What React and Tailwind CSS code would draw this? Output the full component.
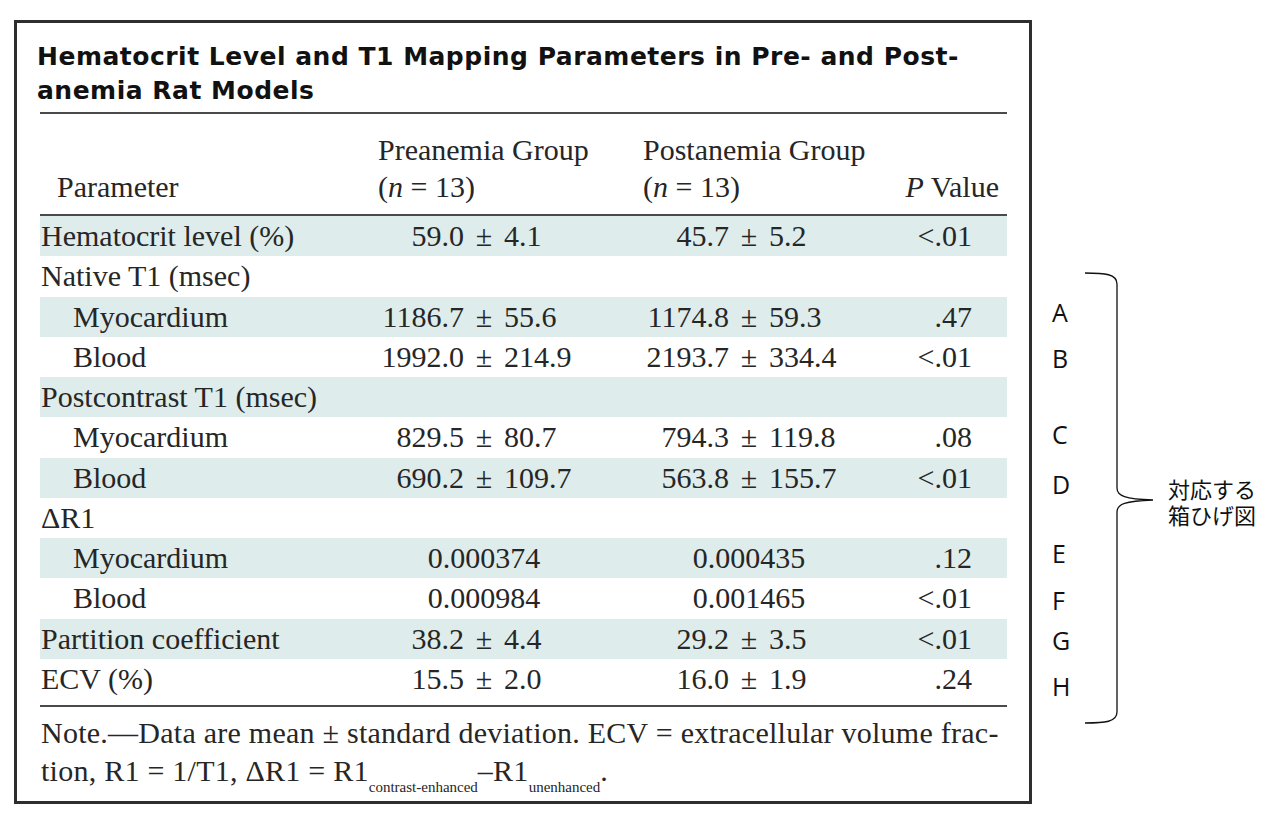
const rows = [
  { label: "Hematocrit level (%)", pre: ["59.0", "4.1"], post: ["45.7", "5.2"], p: "<.01", shade: true },
  { label: "Native T1 (msec)" },
  { label: "Myocardium", sub: true, pre: ["1186.7", "55.6"], post: ["1174.8", "59.3"], p: ".47", shade: true },
  { label: "Blood", sub: true, pre: ["1992.0", "214.9"], post: ["2193.7", "334.4"], p: "<.01" },
  { label: "Postcontrast T1 (msec)", shade: true },
  { label: "Myocardium", sub: true, pre: ["829.5", "80.7"], post: ["794.3", "119.8"], p: ".08" },
  { label: "Blood", sub: true, pre: ["690.2", "109.7"], post: ["563.8", "155.7"], p: "<.01", shade: true },
  { label: "ΔR1" },
  { label: "Myocardium", sub: true, pre: "0.000374", post: "0.000435", p: ".12", shade: true },
  { label: "Blood", sub: true, pre: "0.000984", post: "0.001465", p: "<.01" },
  { label: "Partition coefficient", pre: ["38.2", "4.4"], post: ["29.2", "3.5"], p: "<.01", shade: true },
  { label: "ECV (%)", pre: ["15.5", "2.0"], post: ["16.0", "1.9"], p: ".24" },
];

const letters = [
  { l: "A", mt: "mt-[300px]" },
  { l: "B", mt: "mt-[22px]" },
  { l: "C", mt: "mt-[52px]" },
  { l: "D", mt: "mt-[26px]" },
  { l: "E", mt: "mt-[45px]" },
  { l: "F", mt: "mt-[23px]" },
  { l: "G", mt: "mt-[16px]" },
  { l: "H", mt: "mt-[22px]" },
];

function Val({ v }) {
  if (!v) return <div />;
  if (typeof v === "string") return <div className="w-[212px] text-center">{v}</div>;
  return (
    <div className="flex">
      <span className="w-[86px] text-right">{v[0]}</span>
      <span className="w-[40px] text-center">±</span>
      <span>{v[1]}</span>
    </div>
  );
}

export default function App() {
  return (
    <div className="w-[1280px] h-[827px] bg-white flex items-start text-[#262626]">
      {/* table frame */}
      <div className="ml-[14px] mt-[20px] w-[1018px] h-[784px] border-[3px] border-[#2e2e2e] pl-[23px] pr-[22px] font-['Liberation_Serif','Times_New_Roman',serif] text-[30px]">
        <div className="pt-[17px] -ml-[3px] leading-[34px] font-['DejaVu_Sans',sans-serif] font-bold text-[25px] tracking-[0.5px] text-[#111] whitespace-nowrap">
          Hematocrit Level and T1 Mapping Parameters in Pre- and Post-
          <br />
          anemia Rat Models
        </div>
        <div className="mt-[4px] h-[2px] bg-[#4a4a4a]" />

        <div className="grid grid-cols-[338px_265px_260px_104px] items-end pt-[17px] pb-[9px] leading-[37px]">
          <div className="pl-[17px]">Parameter</div>
          <div>
            Preanemia Group
            <br />(<i>n</i> = 13)
          </div>
          <div>
            Postanemia Group
            <br />(<i>n</i> = 13)
          </div>
          <div className="text-right pr-[8px]">
            <i>P</i> Value
          </div>
        </div>
        <div className="h-[2px] bg-[#4a4a4a]" />

        <div>
          {rows.map((r, i) => (
            <div
              key={i}
              className={`grid grid-cols-[338px_265px_260px_104px] items-center h-[40.25px] leading-[40px] ${r.shade ? "bg-[#deeceb]" : ""}`}
            >
              <div className={r.sub ? "pl-[33px]" : "pl-[1px]"}>{r.label}</div>
              <Val v={r.pre} />
              <Val v={r.post} />
              <div className="text-right pr-[35px]">{r.p}</div>
            </div>
          ))}
        </div>

        <div className="mt-[6px] h-[2px] bg-[#4a4a4a]" />
        <div className="pt-[7px] pl-[1px] leading-[38px] whitespace-nowrap tracking-[0.25px]">
          <div>Note.—Data are mean ± standard deviation. ECV = extracellular volume frac-</div>
          <div>
            tion, R1 = 1/T1, ΔR1 = R1
            <sub className="text-[15px] tracking-normal align-[-7px]">contrast-enhanced</sub>–R1
            <sub className="text-[15px] tracking-normal align-[-7px]">unenhanced</sub>.
          </div>
        </div>
      </div>

      {/* annotation side */}
      <div className="flex items-start">
        <div className="ml-[20px] w-[33px] flex flex-col font-['Open_Sans',sans-serif] text-[25px] leading-[24px] text-[#111]">
          {letters.map((x) => (
            <div key={x.l} className={x.mt}>
              {x.l}
            </div>
          ))}
        </div>
        <svg className="mt-[272px]" width="72" height="452" viewBox="0 0 72 452" fill="none">
          <path
            d="M0 1 C20 1 32 2 32 12 L32 216 C32 224 40 227 68 228 C40 229 32 232 32 240 L32 440 C32 450 20 451 0 451"
            stroke="#111"
            strokeWidth="1.3"
          />
        </svg>
        <div className="ml-[11px] mt-[475px] font-['Noto_Sans_CJK_JP',sans-serif] text-[22px] text-[#111]">
          <div className="h-[26px] leading-[26px]">対応する</div>
          <div className="h-[26px] leading-[26px]">箱ひげ図</div>
        </div>
      </div>
    </div>
  );
}
